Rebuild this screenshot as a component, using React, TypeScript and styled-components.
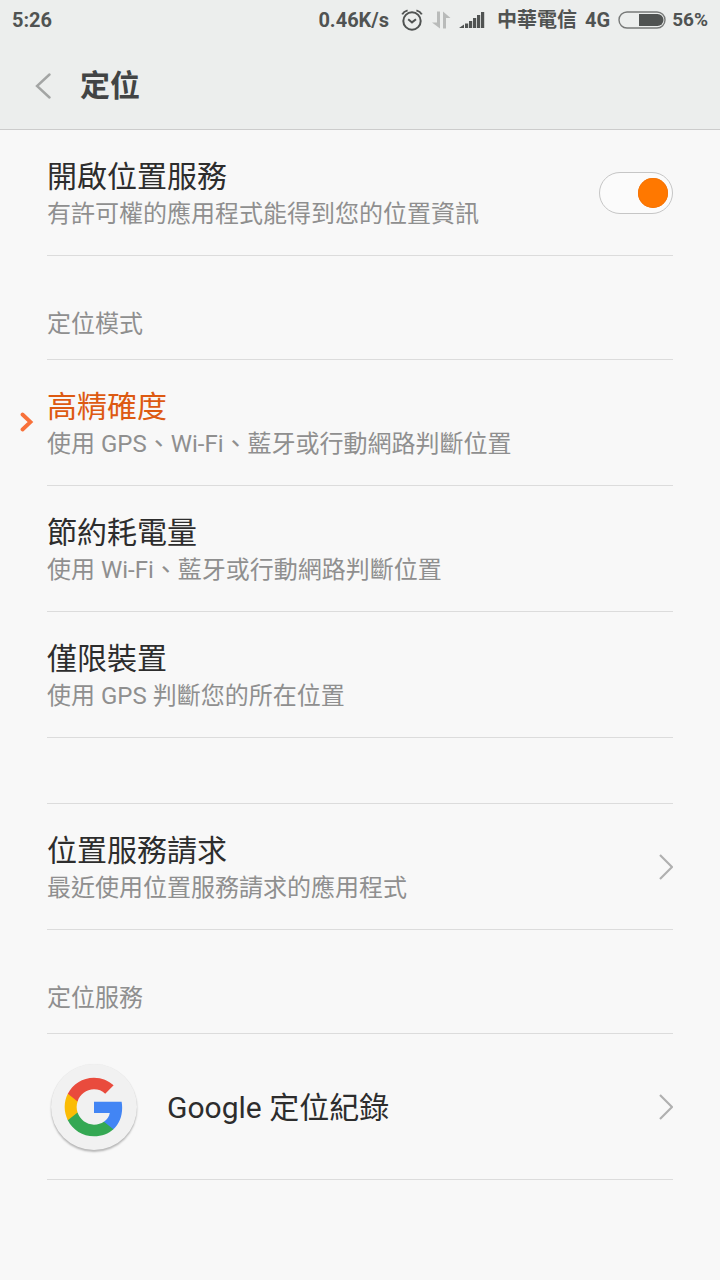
import React, { useState } from 'react';
import styled, { createGlobalStyle } from 'styled-components';

const GlobalStyle = createGlobalStyle`
  *, *::before, *::after { box-sizing: border-box; }
  html { background: #f8f8f8; }
  body {
    margin: 0;
    background: #f8f8f8;
    color: #2d2d2d;
    font-family: Roboto, "Noto Sans CJK TC", sans-serif;
  }
  button, input { font: inherit; }
`;

const TopArea = styled.header`
  background: #eceeed;
  border-bottom: 1px solid #cccccc;
`;

const StatusBar = styled.div`
  display: flex;
  align-items: center;
  justify-content: space-between;
  height: 40px;
  padding: 0 12px;
  color: #505352;
  font-size: 20px;
  line-height: 40px;
  font-weight: 700;
`;

const StatusGroup = styled.div`
  display: flex;
  align-items: center;
  gap: 8px;

  svg { display: block; }
`;

const StatusIcons = styled.div`
  display: flex;
  align-items: center;
  gap: 8px;
  padding: 0 4px;
`;

const Charge = styled.div`
  display: flex;
  align-items: center;
  gap: 6px;
  font-size: 19px;
`;

const TitleBar = styled.div`
  display: flex;
  align-items: center;
  gap: 15px;
  height: 89px;
  padding: 2px 21px 0;
`;

const BackButton = styled.button`
  display: grid;
  place-items: center;
  width: 44px;
  height: 48px;
  padding: 0;
  border: 0;
  background: none;
  color: #a3a5a4;
`;

const PageTitle = styled.h1`
  margin: 0;
  color: #424444;
  font-size: 30px;
  line-height: 40px;
  font-weight: 700;
`;

const Section = styled.section`
  margin: 0;
`;

const SectionTitle = styled.h2`
  display: flex;
  align-items: flex-end;
  height: 104px;
  margin: 0 47px;
  padding-bottom: 18px;
  border-bottom: 1px solid #dcdcdc;
  color: #8f8f8f;
  font-size: 24px;
  line-height: 34px;
  font-weight: 400;
`;

const Spacer = styled.div`
  height: 66px;
  margin: 0 47px;
  border-bottom: 1px solid #dcdcdc;
`;

const rowShape = `
  display: grid;
  grid-template-columns: 47px minmax(0, 1fr) 47px;
  color: inherit;
  text-decoration: none;
  cursor: pointer;
`;

const LabelRow = styled.label`${rowShape}`;
const LinkRow = styled.a`${rowShape}`;

const RowBody = styled.div<{ $tall?: boolean }>`
  grid-column: 2;
  display: flex;
  align-items: center;
  min-height: ${(p) => (p.$tall ? 146 : 126)}px;
  border-bottom: 1px solid #dcdcdc;

  > svg { flex: none; }
`;

const RowText = styled.div`
  flex: 1;
  min-width: 0;
  padding-top: 2px;
`;

const RowTitle = styled.div<{ $active?: boolean }>`
  color: ${(p) => (p.$active ? '#dd5a12' : '#2d2d2d')};
  font-size: 30px;
  line-height: 40px;
`;

const RowNote = styled.div`
  color: #8f8f8f;
  font-size: 24px;
  line-height: 34px;
`;

const Switch = styled.input`
  appearance: none;
  flex: none;
  display: flex;
  align-items: center;
  justify-content: flex-start;
  width: 74px;
  height: 42px;
  margin: 0;
  padding: 0 4px;
  border: 1px solid #c6c6c6;
  border-radius: 21px;
  background: #fbfbfb;
  cursor: pointer;

  &::before {
    content: "";
    width: 30px;
    height: 30px;
    border-radius: 50%;
    background: #c4c4c4;
  }
  &:checked { justify-content: flex-end; }
  &:checked::before { background: #ff7800; box-shadow: inset 0 0 0 1px #f57508; }
`;

const Gutter = styled.div`
  display: flex;
  align-items: center;
  justify-content: flex-end;
  padding: 0 13px 2px 0;
`;

const Radio = styled.input`
  appearance: none;
  width: 0;
  height: 0;
  margin: 0;

  + svg { visibility: hidden; }
  &:checked + svg { visibility: visible; }
`;

const AppIcon = styled.div`
  display: grid;
  place-items: center;
  flex: none;
  width: 86px;
  height: 86px;
  margin: 0 30px 0 4px;
  border-radius: 50%;
  background: #f1f1f1;
  box-shadow: 0 2px 2px rgba(0, 0, 0, 0.26), 0 0 1px rgba(0, 0, 0, 0.08);
`;

const AlarmIcon = () => (
  <svg width="22" height="22" viewBox="0 0 22 22" fill="none" stroke="#505352" strokeWidth="2" aria-hidden="true">
    <circle cx="11" cy="12" r="8.7" />
    <path d="M7.2 10.2 11 13.4l4-3.2M1.2 5.4Q2.8 2.4 6.6 1.4M20.8 5.4Q19.2 2.4 15.4 1.4" />
  </svg>
);

const TrafficIcon = () => (
  <svg width="20" height="20" viewBox="0 0 20 20" fill="#b9bbba" aria-hidden="true">
    <path d="M6 1.500h3v17L1 12.500h5zM12 18.500h3V8H19.500L12 1.500z" />
  </svg>
);

const SignalIcon = () => (
  <svg width="26" height="18" viewBox="0 0 26 18" fill="#505352" aria-hidden="true">
    <path d="M0 17 5 13.500v3.500zM6 12.500h3.200v4.500H6zM10 10h3.200v7H10zM14 7h3.200v10H14zM18 4h3.200v13H18zM22 1h3.200v16H22z" />
  </svg>
);

const BatteryIcon = () => (
  <svg width="48" height="18" viewBox="0 0 48 18" aria-hidden="true">
    <rect x="1" y="1" width="46" height="16" rx="8" fill="none" stroke="#777978" strokeWidth="1.4" />
    <path d="M21 3h18.500a6 6 0 0 1 0 12H21z" fill="#505352" />
  </svg>
);

const BackIcon = () => (
  <svg width="16" height="26" viewBox="0 0 16 26" fill="none" stroke="currentColor" strokeWidth="2.4" strokeLinecap="round" aria-hidden="true">
    <path d="M14.500 1.500 2 13l12.500 11.500" />
  </svg>
);

const Chevron = () => (
  <svg width="15" height="26" viewBox="0 0 15 26" fill="none" stroke="#b0b0b0" strokeWidth="2.200" aria-hidden="true">
    <path d="M2 1l12 12L2 25" />
  </svg>
);

const Marker = () => (
  <svg width="14" height="20" viewBox="0 0 14 20" fill="none" stroke="#f8713a" strokeWidth="3.800" strokeLinecap="round" aria-hidden="true">
    <path d="M2.500 2.500 10.500 10l-8 7.500" />
  </svg>
);

const GoogleLogo = () => (
  <svg width="64" height="64" viewBox="0 0 24 24" aria-hidden="true">
    <path fill="#4285f4" d="M22.56 12.25c0-.78-.07-1.53-.2-2.25H12v4.26h5.92c-.26 1.37-1.04 2.53-2.21 3.31v2.77h3.57c2.08-1.92 3.28-4.74 3.28-8.09z" />
    <path fill="#34a853" d="M12 23c2.97 0 5.46-.98 7.28-2.66l-3.57-2.77c-.98.66-2.23 1.06-3.71 1.06-2.86 0-5.29-1.93-6.16-4.53H2.18v2.84C3.99 20.53 7.7 23 12 23z" />
    <path fill="#fbbc05" d="M5.84 14.09c-.22-.66-.35-1.36-.35-2.09s.13-1.43.35-2.09V7.07H2.18C1.43 8.55 1 10.22 1 12s.43 3.45 1.18 4.93l3.66-2.84z" />
    <path fill="#e94b3d" d="M12 5.38c1.62 0 3.06.56 4.21 1.64l3.15-3.15C17.45 2.09 14.97 1 12 1 7.7 1 3.99 3.47 2.18 7.07l3.66 2.84c.87-2.6 3.3-4.53 6.16-4.53z" />
  </svg>
);

const modes = [
  { id: 'high', title: '高精確度', note: '使用 GPS、Wi-Fi、藍牙或行動網路判斷位置' },
  { id: 'saving', title: '節約耗電量', note: '使用 Wi-Fi、藍牙或行動網路判斷位置' },
  { id: 'device', title: '僅限裝置', note: '使用 GPS 判斷您的所在位置' },
];

export default function App() {
  const [enabled, setEnabled] = useState(true);
  const [mode, setMode] = useState('high');

  return (
    <>
      <GlobalStyle />
      <TopArea>
        <StatusBar>
          <span>5:26</span>
          <StatusGroup>
            <span>0.46K/s</span>
            <StatusIcons>
              <AlarmIcon />
              <TrafficIcon />
              <SignalIcon />
            </StatusIcons>
            <span>中華電信</span>
            <span>4G</span>
            <Charge>
              <BatteryIcon />
              <span>56%</span>
            </Charge>
          </StatusGroup>
        </StatusBar>
        <TitleBar>
          <BackButton type="button" aria-label="返回"><BackIcon /></BackButton>
          <PageTitle>定位</PageTitle>
        </TitleBar>
      </TopArea>
      <main lang="zh-Hant">
        <LabelRow>
          <RowBody>
            <RowText>
              <RowTitle>開啟位置服務</RowTitle>
              <RowNote>有許可權的應用程式能得到您的位置資訊</RowNote>
            </RowText>
            <Switch type="checkbox" role="switch" checked={enabled} onChange={(e) => setEnabled(e.target.checked)} />
          </RowBody>
        </LabelRow>
        <Section>
          <SectionTitle>定位模式</SectionTitle>
          {modes.map((m) => (
            <LabelRow key={m.id}>
              <Gutter>
                <Radio type="radio" name="mode" checked={mode === m.id} onChange={() => setMode(m.id)} />
                <Marker />
              </Gutter>
              <RowBody>
                <RowText>
                  <RowTitle $active={mode === m.id}>{m.title}</RowTitle>
                  <RowNote>{m.note}</RowNote>
                </RowText>
              </RowBody>
            </LabelRow>
          ))}
        </Section>
        <Spacer />
        <LinkRow href="#requests">
          <RowBody>
            <RowText>
              <RowTitle>位置服務請求</RowTitle>
              <RowNote>最近使用位置服務請求的應用程式</RowNote>
            </RowText>
            <Chevron />
          </RowBody>
        </LinkRow>
        <Section>
          <SectionTitle>定位服務</SectionTitle>
          <LinkRow href="#history">
            <RowBody $tall>
              <AppIcon><GoogleLogo /></AppIcon>
              <RowText>
                <RowTitle>Google 定位紀錄</RowTitle>
              </RowText>
              <Chevron />
            </RowBody>
          </LinkRow>
        </Section>
      </main>
    </>
  );
}
